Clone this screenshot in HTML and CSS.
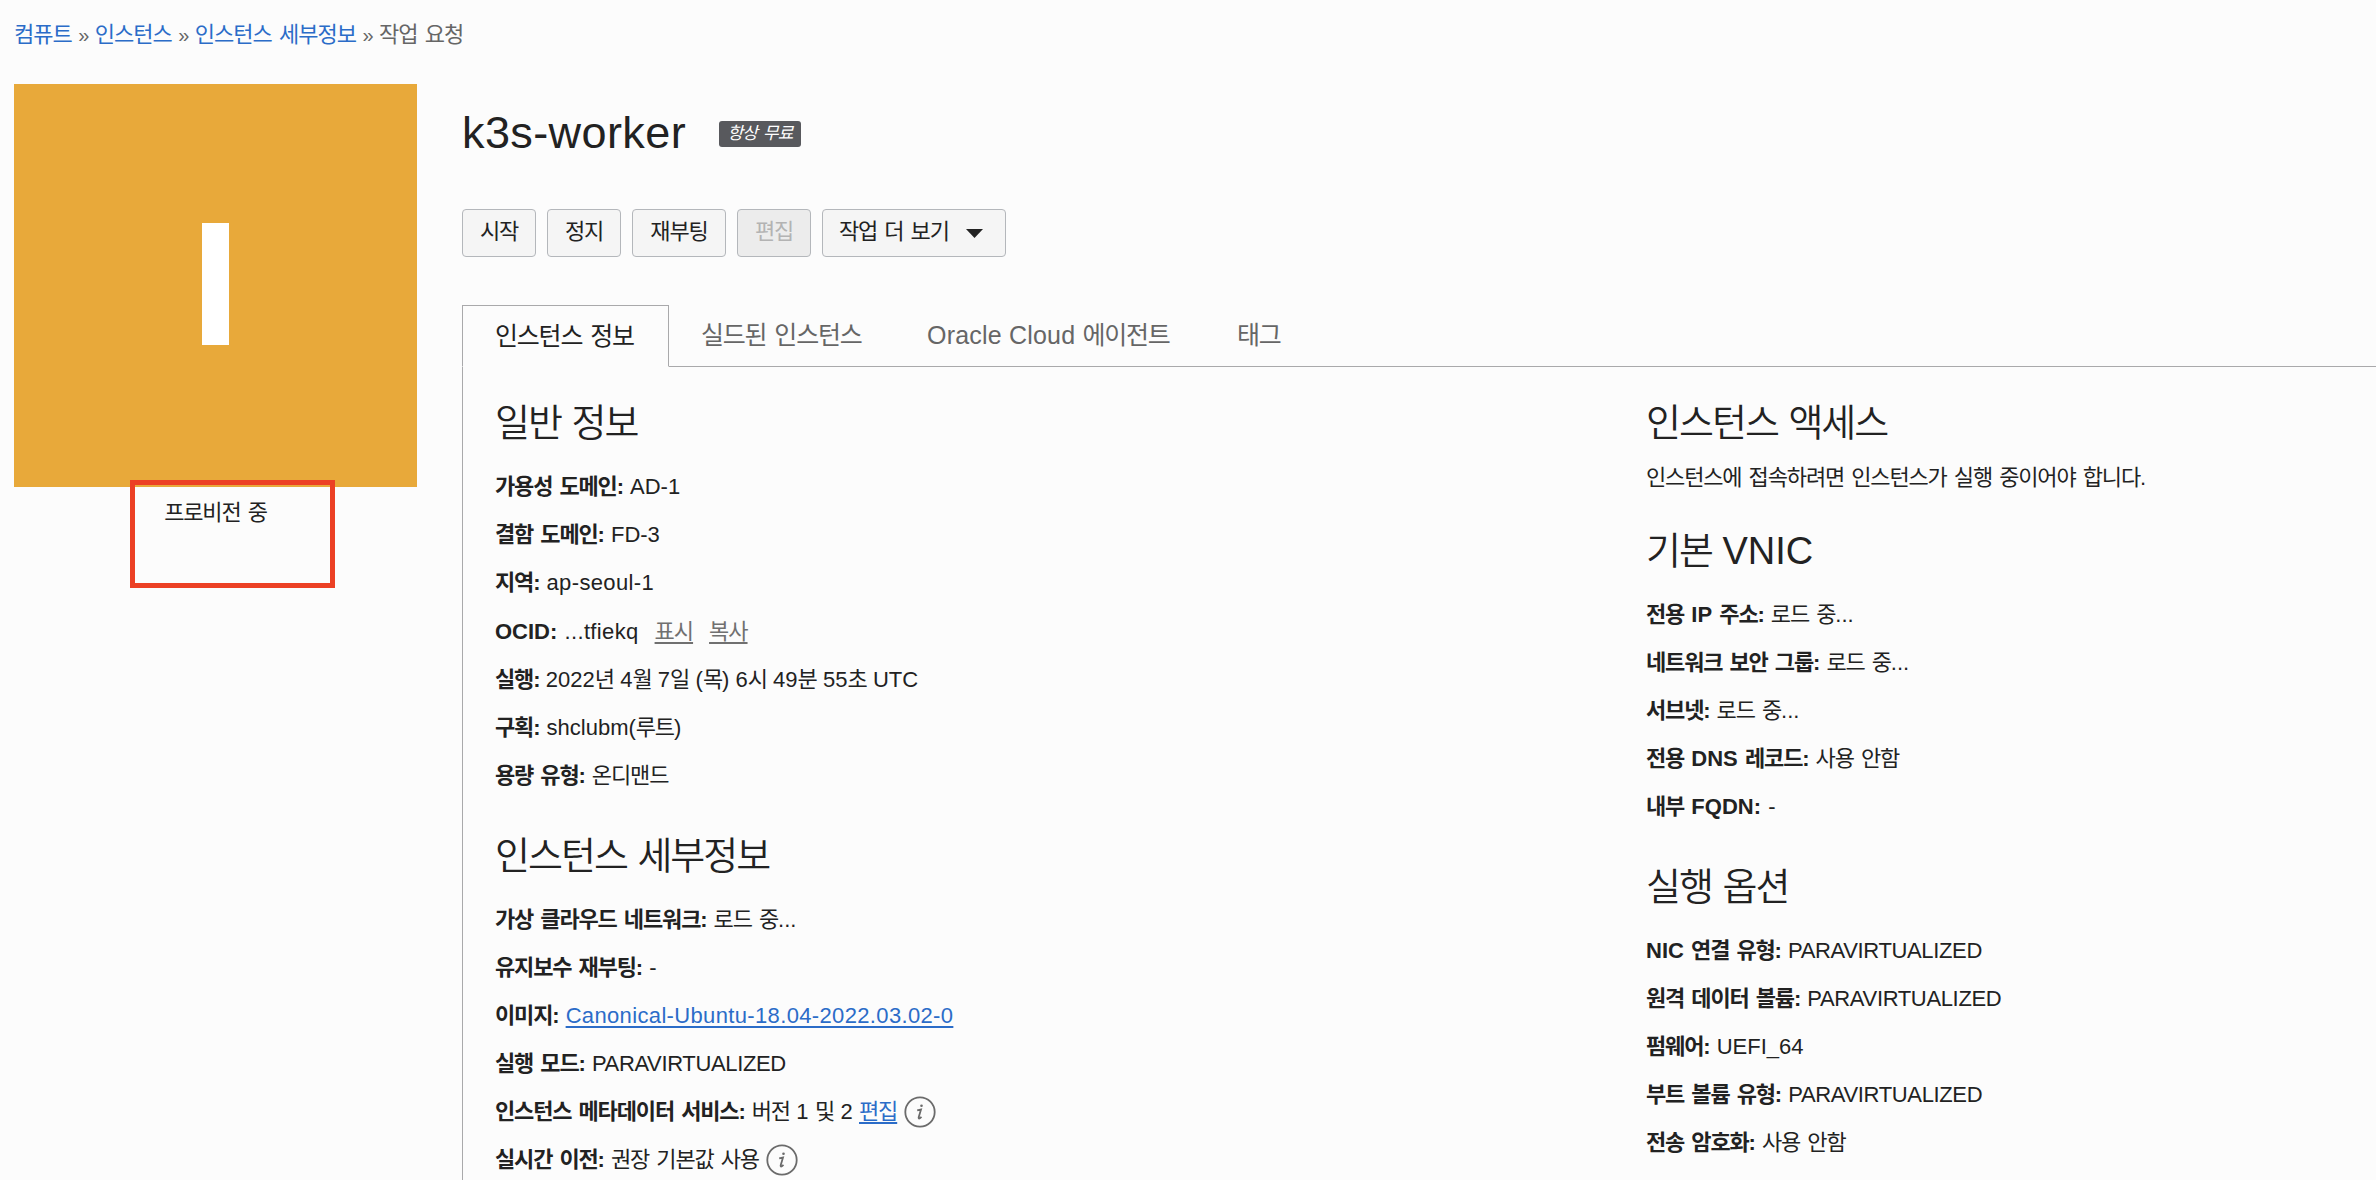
FILE: index.html
```
<!DOCTYPE html>
<html lang="ko">
<head>
<meta charset="utf-8">
<title>k3s-worker</title>
<link rel="stylesheet" href="styles.css">
</head>
<body>
<nav class="crumbs"><a>컴퓨트</a><i>»</i><a>인스턴스</a><i>»</i><a>인스턴스 세부정보</a><i>»</i><span>작업 요청</span></nav>
<div class="page">
  <aside class="side">
    <div class="tile"><div class="bar"></div></div>
    <div class="status">프로비전 중</div>
    <div class="marker"></div>
  </aside>
  <main class="main">
    <header class="title"><h1>k3s-worker</h1><span class="badge">항상 무료</span></header>
    <div class="actions">
      <button>시작</button><button>정지</button><button class="three">재부팅</button><button class="off">편집</button>
      <button class="more">작업 더 보기<svg width="17" height="9" viewBox="0 0 17 9"><path d="M0 0h17L8.500 9z" fill="#222"/></svg></button>
    </div>
    <div class="tabs">
      <div class="tab active">인스턴스 정보</div><div class="tab t2">실드된 인스턴스</div><div class="tab t3"><span class="en">Oracle Cloud </span>에이전트</div><div class="tab t4">태그</div>
    </div>
    <div class="panel">
      <section class="col">
        <h2>일반 정보</h2>
        <div class="row"><b>가용성 도메인:</b> <span class="en">AD-1</span></div>
        <div class="row"><b>결함 도메인:</b> <span class="en">FD-3</span></div>
        <div class="row"><b>지역:</b> <span class="en hy">ap-seoul-1</span></div>
        <div class="row tall"><b class="en">OCID:</b> <span class="en hy">...tfiekq</span><a class="gray">표시</a><a class="gray">복사</a></div>
        <div class="row date"><b>실행:</b> <span class="en">2022</span>년 <span class="en">4</span>월 <span class="en">7</span>일 <span class="en">(</span>목<span class="en">) 6</span>시 <span class="en">49</span>분 <span class="en">55</span>초 <span class="en">UTC</span></div>
        <div class="row"><b>구획:</b> <span class="en">shclubm(</span>루트<span class="en">)</span></div>
        <div class="row"><b>용량 유형:</b> 온디맨드</div>
        <h2 class="next">인스턴스 세부정보</h2>
        <div class="row"><b>가상 클라우드 네트워크:</b> 로드 중<span class="en">...</span></div>
        <div class="row"><b>유지보수 재부팅:</b> <span class="en">-</span></div>
        <div class="row"><b>이미지:</b> <a class="link en hy">Canonical-Ubuntu-18.04-2022.03.02-0</a></div>
        <div class="row"><b>실행 모드:</b> <span class="en caps">PARAVIRTUALIZED</span></div>
        <div class="row"><b>인스턴스 메타데이터 서비스:</b> <span class="date">버전 <span class="en">1</span> 및 <span class="en">2</span> </span><a class="link">편집</a><svg class="info" viewBox="0 0 32 32"><circle cx="16" cy="16" r="14.700"/><path d="M13.200 14.400l3.800-.9-2.300 7.800q-.3 1.500.8 1.100 1-.4 1.900-1.700"/><circle class="dot" cx="17.500" cy="9.800" r="1.300"/></svg></div>
        <div class="row"><b>실시간 이전:</b> 권장 기본값 사용<svg class="info" viewBox="0 0 32 32"><circle cx="16" cy="16" r="14.700"/><path d="M13.200 14.400l3.800-.9-2.300 7.800q-.3 1.500.8 1.100 1-.4 1.900-1.700"/><circle class="dot" cx="17.500" cy="9.800" r="1.300"/></svg></div>
      </section>
      <section class="col">
        <h2 class="tight">인스턴스 액세스</h2>
        <div class="row">인스턴스에 접속하려면 인스턴스가 실행 중이어야 합니다<span class="en">.</span></div>
        <h2 class="near">기본 <span class="en">VNIC</span></h2>
        <div class="row"><b>전용 <span class="en">IP</span> 주소:</b> 로드 중<span class="en">...</span></div>
        <div class="row"><b>네트워크 보안 그룹:</b> 로드 중<span class="en">...</span></div>
        <div class="row"><b>서브넷:</b> 로드 중<span class="en">...</span></div>
        <div class="row"><b>전용 <span class="en">DNS</span> 레코드:</b> 사용 안함</div>
        <div class="row"><b>내부 <span class="en">FQDN:</span></b> <span class="en">-</span></div>
        <h2 class="next">실행 옵션</h2>
        <div class="row"><b><span class="en">NIC</span> 연결 유형:</b> <span class="en caps">PARAVIRTUALIZED</span></div>
        <div class="row"><b>원격 데이터 볼륨:</b> <span class="en caps">PARAVIRTUALIZED</span></div>
        <div class="row"><b>펌웨어:</b> <span class="en">UEFI_64</span></div>
        <div class="row"><b>부트 볼륨 유형:</b> <span class="en caps">PARAVIRTUALIZED</span></div>
        <div class="row"><b>전송 암호화:</b> 사용 안함</div>
      </section>
    </div>
  </main>
</div>
</body>
</html>
```
FILE: styles.css
```
* { box-sizing: border-box; }
html { overflow: hidden; }
body {
  margin: 0;
  height: 1180px;
  overflow: hidden;
  background: #fcfcfc;
  color: #222;
  font: 22px/30px "Liberation Sans", "Noto Sans CJK KR", sans-serif;
  letter-spacing: -1.15px;
  word-spacing: 2.2px;
  white-space: nowrap;
}
.en { letter-spacing: 0; word-spacing: 0; }
.hy { letter-spacing: 0.35px; }
.caps { letter-spacing: -0.35px; }
.date { word-spacing: 1.4px; }

.crumbs { display: flex; height: 84px; padding: 20px 0 0 14px; color: #666; letter-spacing: -1px; }
.crumbs a { color: #2b6cc8; }
.crumbs i { width: 23px; font-style: normal; font-size: 20px; text-align: center; }

.page { display: flex; }
.side { position: relative; width: 462px; padding-left: 14px; }
.tile { display: flex; justify-content: center; width: 403px; height: 403px; padding-top: 139px; background: #e8a93a; }
.bar { width: 27px; height: 122px; background: #fff; }
.status { width: 403px; padding-top: 11px; text-align: center; }
.marker { position: absolute; left: 130px; top: 396px; width: 205px; height: 108px; border: 5px solid #ec4024; }

.main { flex: 1; min-width: 0; }
.title { display: flex; height: 125px; padding-top: 24px; }
h1 { width: 257px; margin: 0; font-weight: 400; font-size: 45px; line-height: 50px; letter-spacing: 0.4px; }
.badge { width: 82px; height: 26px; margin-top: 13px; border-radius: 3px; background: #58595d; color: #fff; font-size: 17px; line-height: 25px; letter-spacing: -0.9px; font-style: italic; text-align: center; }

.actions { display: flex; gap: 11px; height: 96px; align-items: flex-start; }
button { width: 74px; height: 48px; padding: 0 0 2px; border: 1px solid #b4b7bb; border-radius: 4px; background: #f5f5f5; color: #222; font: inherit; letter-spacing: inherit; word-spacing: inherit; }
.three { width: 94px; }
.off { background: #ececec; color: #b3b3b3; }
.more { display: flex; align-items: center; width: 184px; padding-left: 16px; }
.more svg { margin: 3px 0 0 17px; }

.tabs { display: flex; height: 62px; font-size: 25px; color: #666; letter-spacing: -1.2px; border-bottom: 1px solid #a9a9ab; }
.tab { height: 61px; line-height: 60px; }
.active { width: 207px; height: 62px; padding-left: 32px; border: 1px solid #a9a9ab; border-bottom-color: #fcfcfc; background: #fcfcfc; color: #222; }
.t2 { width: 226px; padding-left: 32px; }
.t3 { width: 310px; padding-left: 32px; }
.t3 .en { letter-spacing: 0.2px; }
.t4 { padding-left: 32px; }

.panel { display: grid; grid-template-columns: 1151px 1fr; height: 813px; padding: 28px 0 0 32px; border-left: 1px solid #a9a9ab; overflow: hidden; }
h2 { margin: 0 0 12px; height: 56px; line-height: 56px; font-size: 38px; font-weight: 350; letter-spacing: -2px; word-spacing: 2px; }
h2.tight { margin-bottom: 3px; }
h2.next { margin-top: 28px; }
h2.near { margin-top: 21px; }
.row { height: 48px; line-height: 48px; }
.tall { height: 49px; line-height: 49px; }
b { font-weight: 700; }
a { text-underline-offset: 3px; text-decoration-thickness: 2px; }
.link { color: #2b6cc8; text-decoration-line: underline; }
.gray { margin-left: 16px; color: #707070; text-decoration-line: underline; }
.tall .gray { letter-spacing: -1px; }
.info { width: 32px; height: 32px; margin-left: 7px; vertical-align: -9px; fill: none; stroke: #6b6b6b; stroke-width: 1.8; }
.info .dot { fill: #6b6b6b; stroke: none; }
```
